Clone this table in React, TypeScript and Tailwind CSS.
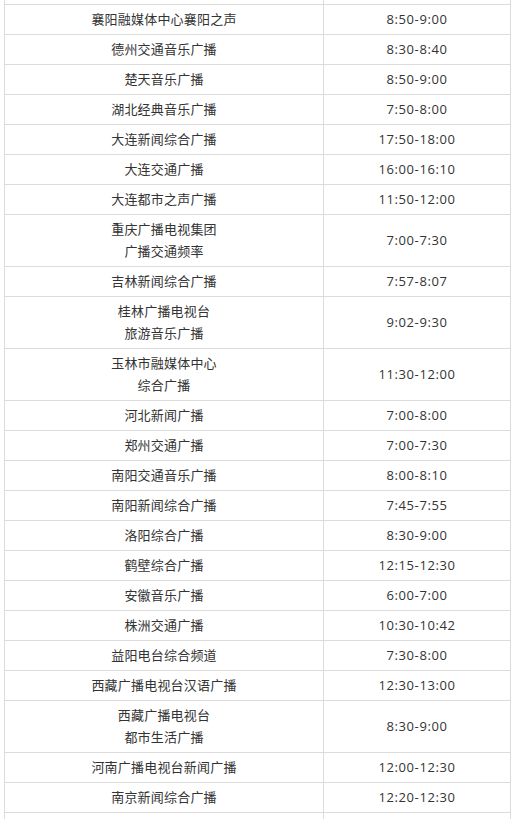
type Row = { name: string[]; time: string };

const rows: Row[] = [
  { name: ["襄阳融媒体中心襄阳之声"], time: "8:50-9:00" },
  { name: ["德州交通音乐广播"], time: "8:30-8:40" },
  { name: ["楚天音乐广播"], time: "8:50-9:00" },
  { name: ["湖北经典音乐广播"], time: "7:50-8:00" },
  { name: ["大连新闻综合广播"], time: "17:50-18:00" },
  { name: ["大连交通广播"], time: "16:00-16:10" },
  { name: ["大连都市之声广播"], time: "11:50-12:00" },
  { name: ["重庆广播电视集团", "广播交通频率"], time: "7:00-7:30" },
  { name: ["吉林新闻综合广播"], time: "7:57-8:07" },
  { name: ["桂林广播电视台", "旅游音乐广播"], time: "9:02-9:30" },
  { name: ["玉林市融媒体中心", "综合广播"], time: "11:30-12:00" },
  { name: ["河北新闻广播"], time: "7:00-8:00" },
  { name: ["郑州交通广播"], time: "7:00-7:30" },
  { name: ["南阳交通音乐广播"], time: "8:00-8:10" },
  { name: ["南阳新闻综合广播"], time: "7:45-7:55" },
  { name: ["洛阳综合广播"], time: "8:30-9:00" },
  { name: ["鹤壁综合广播"], time: "12:15-12:30" },
  { name: ["安徽音乐广播"], time: "6:00-7:00" },
  { name: ["株洲交通广播"], time: "10:30-10:42" },
  { name: ["益阳电台综合频道"], time: "7:30-8:00" },
  { name: ["西藏广播电视台汉语广播"], time: "12:30-13:00" },
  { name: ["西藏广播电视台", "都市生活广播"], time: "8:30-9:00" },
  { name: ["河南广播电视台新闻广播"], time: "12:00-12:30" },
  { name: ["南京新闻综合广播"], time: "12:20-12:30" },
];

export default function App() {
  return (
    <div
      className="h-[819px] overflow-hidden bg-white text-[13px] leading-[22px] tracking-[0.2px] text-[#333]"
      style={{ fontFamily: '"Open Sans", "Noto Sans CJK SC", sans-serif' }}
    >
      <div className="ml-[4px] w-[507px] border-x border-[#dcdcdc]">
        {/* tail of the row above */}
        <div className="flex h-[5px] border-b border-[#dcdcdc]">
          <div className="w-[319px] border-r border-[#dcdcdc]" />
          <div className="flex-1" />
        </div>
        {rows.map((r, i) => (
          <div key={i} className="flex border-b border-[#dcdcdc]">
            <div className="w-[319px] border-r border-[#dcdcdc] pb-[4px] pt-[3px] text-center">
              {r.name.map((n) => (
                <p key={n}>{n}</p>
              ))}
            </div>
            <div className="flex flex-1 items-center justify-center pb-[4px] pt-[3px] tracking-[0.6px]">
              {r.time}
            </div>
          </div>
        ))}
        <div className="flex h-[30px]">
          <div className="w-[319px] border-r border-[#dcdcdc]" />
          <div className="flex-1" />
        </div>
      </div>
    </div>
  );
}
